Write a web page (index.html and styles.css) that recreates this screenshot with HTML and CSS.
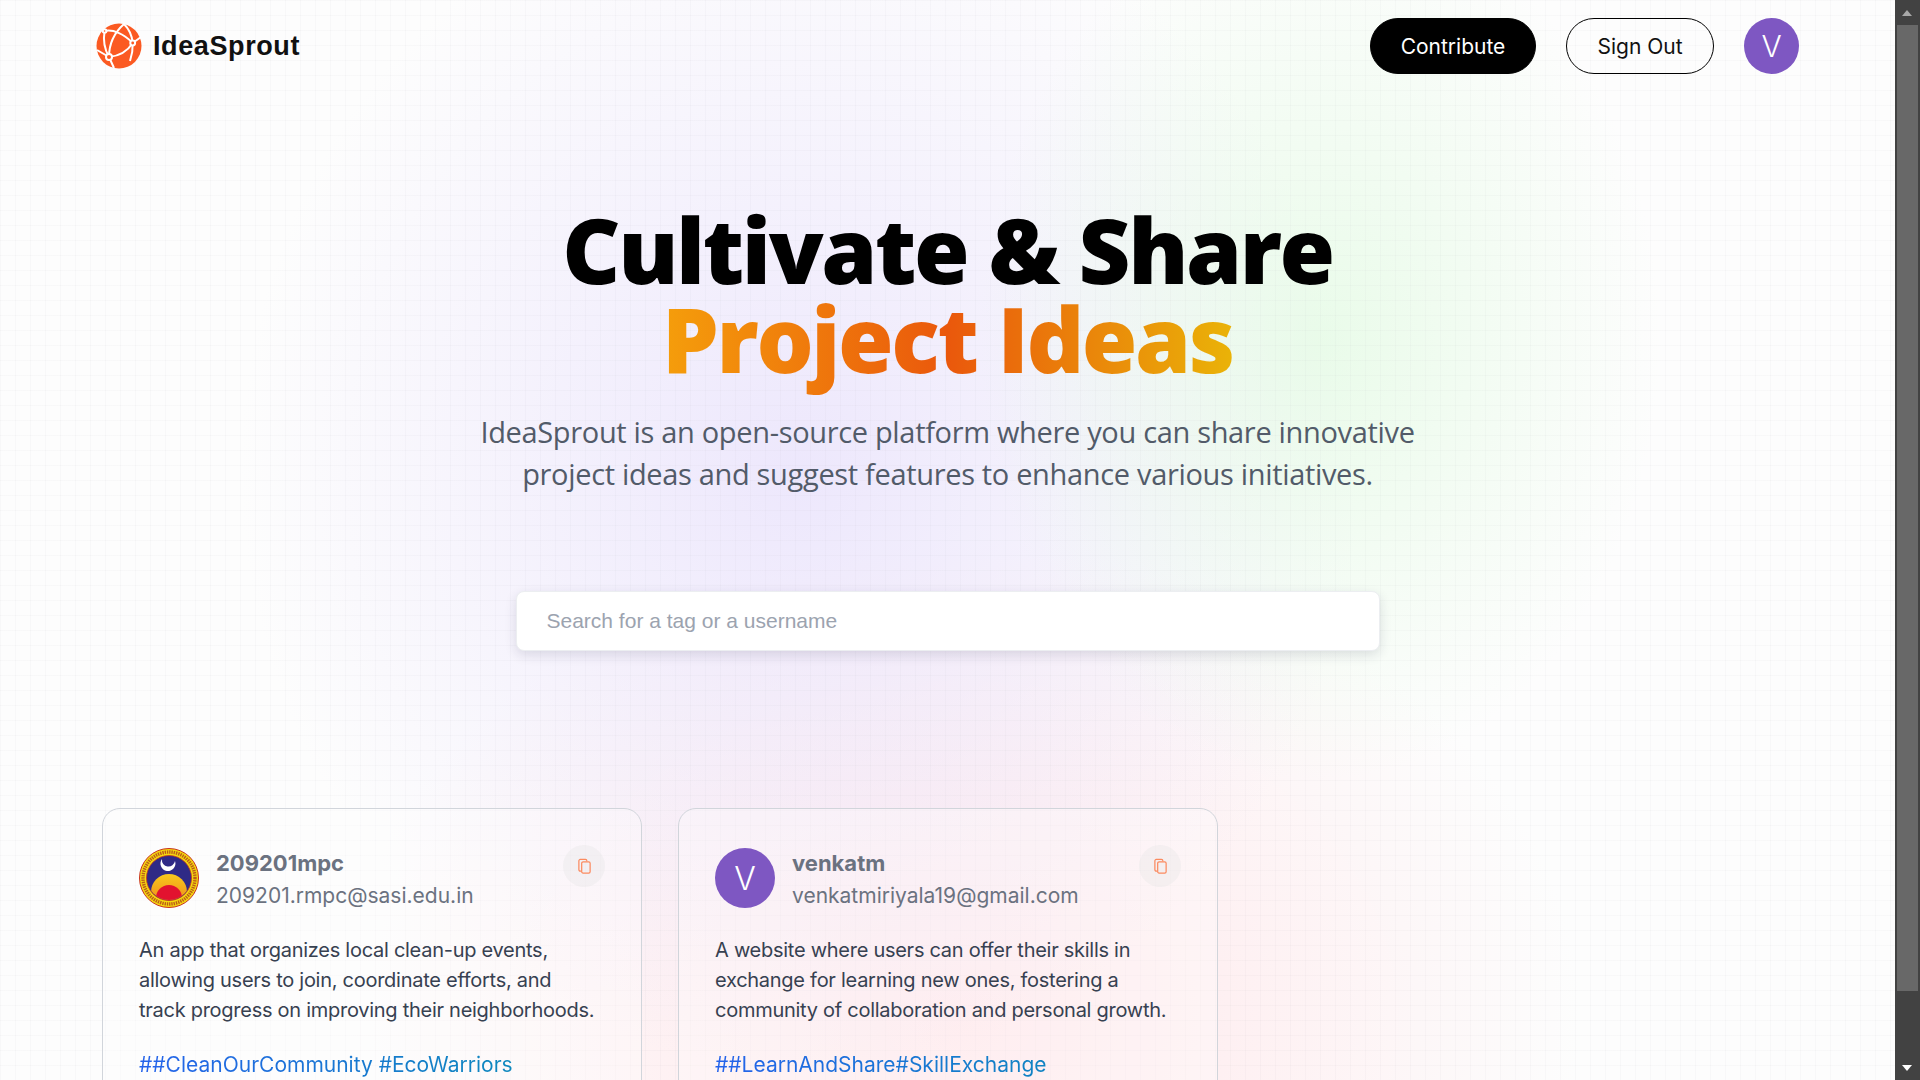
FILE: index.html
```html
<!DOCTYPE html>
<html lang="en">
<head>
  <meta charset="UTF-8">
  <meta name="viewport" content="width=device-width, initial-scale=1.0">
  <title>IdeaSprout</title>
  <link rel="stylesheet" href="styles.css">
</head>
<body>
  <div class="page">
    <div class="bg-grid"></div>

    <nav class="nav">
      <a class="brand" href="#">
        <svg class="brand-logo" viewBox="0 0 46 46" aria-hidden="true">
          <circle cx="23" cy="23" r="22.5" fill="#fb5a22"/>
          <g fill="none" stroke="#fff" stroke-width="2">
            <path d="M8.6 8 C17 6 28 11 36.7 20"/>
            <path d="M28 1 C19 9 13 20 13 34"/>
            <path d="M28 1 C33 6 36 12 36.7 20 C31 29 23 33 13 34"/>
            <path d="M8.6 8 C7 17 9 27 13 34 L18 45"/>
            <path d="M1 27 L13 34"/>
            <path d="M36.7 20 C37 27 36 32 34 38"/>
            <path d="M36.7 20 L45 14"/>
          </g>
          <g fill="#fb5a22" stroke="#fff" stroke-width="2">
            <circle cx="13" cy="34" r="3"/>
            <circle cx="36.7" cy="20" r="2.4"/>
            <circle cx="8.6" cy="8" r="1.8"/>
          </g>
        </svg>
        <span class="brand-name">IdeaSprout</span>
      </a>
      <div class="nav-actions">
        <button class="btn btn-dark">Contribute</button>
        <button class="btn btn-outline">Sign Out</button>
        <div class="avatar avatar-nav">V</div>
      </div>
    </nav>

    <section class="hero">
      <h1 class="hero-title">Cultivate &amp; Share<br><span class="hero-accent">Project Ideas</span></h1>
      <p class="hero-text">IdeaSprout is an open-source platform where you can share innovative<br>project ideas and suggest features to enhance various initiatives.</p>
    </section>

    <div class="search">
      <input class="search-input" type="text" placeholder="Search for a tag or a username">
    </div>

    <section class="cards">
      <article class="card">
        <header class="card-head">
          <svg class="card-photo" viewBox="0 0 60 60" aria-hidden="true">
            <defs>
              <linearGradient id="sunset" x1="0" y1="0" x2="0" y2="1">
                <stop offset="0" stop-color="#f7c91c"/>
                <stop offset="1" stop-color="#ee7a1a"/>
              </linearGradient>
              <clipPath id="inner"><circle cx="30" cy="30" r="22"/></clipPath>
            </defs>
            <circle cx="30" cy="30" r="29.5" fill="#f4d90f" stroke="#c8321d" stroke-width="1"/>
            <circle cx="30" cy="30" r="26" fill="none" stroke="#a8321d" stroke-width="3.4" stroke-dasharray="1.4 0.9" opacity="0.75"/>
            <circle cx="30" cy="30" r="22.5" fill="#2f2a86" stroke="#c8321d" stroke-width="0.8"/>
            <g clip-path="url(#inner)">
              <circle cx="30" cy="44" r="18" fill="url(#sunset)"/>
              <circle cx="30" cy="50" r="13" fill="#e2122f"/>
            </g>
            <path d="M23 11 A7.5 7.5 0 1 0 36 13 A6.5 6.5 0 0 1 23 11 Z" fill="#fff"/>
          </svg>
          <div class="card-user">
            <div class="card-name">209201mpc</div>
            <div class="card-email">209201.rmpc@sasi.edu.in</div>
          </div>
          <button class="copy-btn" aria-label="Copy">
            <svg class="copy-icon" viewBox="0 0 16 16" aria-hidden="true">
              <path d="M4.5 13.5 H3.5 A1.5 1.5 0 0 1 2 12 V2.5 A1.5 1.5 0 0 1 3.5 1 H9 A1.5 1.5 0 0 1 10.5 2.5 V3"/>
              <rect x="5" y="3.5" width="9" height="12" rx="1.5"/>
            </svg>
          </button>
        </header>
        <p class="card-text">An app that organizes local clean-up events, allowing users to join, coordinate efforts, and track progress on improving their neighborhoods.</p>
        <p class="card-tags">##CleanOurCommunity #EcoWarriors</p>
      </article>

      <article class="card">
        <header class="card-head">
          <div class="avatar avatar-card">V</div>
          <div class="card-user">
            <div class="card-name">venkatm</div>
            <div class="card-email">venkatmiriyala19@gmail.com</div>
          </div>
          <button class="copy-btn" aria-label="Copy">
            <svg class="copy-icon" viewBox="0 0 16 16" aria-hidden="true">
              <path d="M4.5 13.5 H3.5 A1.5 1.5 0 0 1 2 12 V2.5 A1.5 1.5 0 0 1 3.5 1 H9 A1.5 1.5 0 0 1 10.5 2.5 V3"/>
              <rect x="5" y="3.5" width="9" height="12" rx="1.5"/>
            </svg>
          </button>
        </header>
        <p class="card-text">A website where users can offer their skills in exchange for learning new ones, fostering a community of collaboration and personal growth.</p>
        <p class="card-tags">##LearnAndShare#SkillExchange</p>
      </article>
    </section>
  </div>

  <div class="scrollbar">
    <div class="scroll-up"></div>
    <div class="scroll-thumb"></div>
    <div class="scroll-down"></div>
  </div>
</body>
</html>
```

FILE: styles.css
```css
* {
  box-sizing: border-box;
}

html, body {
  height: 100%;
}

body {
  margin: 0;
  display: flex;
  overflow: hidden;
  font-family: Inter, "Liberation Sans", sans-serif;
  background: #fff;
}

.page {
  position: relative;
  flex: 1;
  height: 100vh;
  overflow: hidden;
  background:
    radial-gradient(ellipse 340px 440px at 1320px 340px, rgba(220, 250, 220, 0.6), rgba(220, 250, 220, 0)),
    radial-gradient(ellipse 560px 600px at 800px 470px, rgba(230, 222, 252, 0.7), rgba(230, 222, 252, 0)),
    radial-gradient(ellipse 620px 480px at 960px 1020px, rgba(255, 226, 230, 0.85), rgba(255, 226, 230, 0)),
    #fdfdfd;
}

.bg-grid {
  position: absolute;
  inset: 0;
  background-image:
    linear-gradient(to right, rgba(120, 120, 140, 0.035) 1px, transparent 1px),
    linear-gradient(to bottom, rgba(120, 120, 140, 0.035) 1px, transparent 1px);
  background-size: 15px 15px;
}

.nav {
  position: relative;
  display: flex;
  justify-content: space-between;
  align-items: center;
  padding: 18px 96px 0 96px;
}

.brand {
  display: flex;
  align-items: center;
  gap: 11px;
  text-decoration: none;
}

.brand-logo {
  width: 46px;
  height: 46px;
}

.brand-name {
  font-family: "Liberation Sans", Arial, sans-serif;
  font-size: 27px;
  font-weight: 700;
  letter-spacing: 0.6px;
  color: #111;
}

.nav-actions {
  display: flex;
  align-items: center;
  gap: 30px;
}

.btn {
  height: 56px;
  border-radius: 28px;
  font-family: Inter, sans-serif;
  font-size: 21px;
  font-weight: 400;
  cursor: pointer;
}

.btn-dark {
  width: 166px;
  background: #000;
  border: 1px solid #000;
  color: #fff;
}

.btn-outline {
  width: 148px;
  background: transparent;
  border: 1px solid #000;
  color: #111;
}

.avatar {
  display: flex;
  align-items: center;
  justify-content: center;
  flex-shrink: 0;
  border-radius: 50%;
  background: #7e57c2;
  color: #fff;
  font-weight: 300;
}

.avatar-nav {
  width: 55px;
  height: 56px;
  font-size: 30px;
}

.avatar-card {
  width: 60px;
  height: 60px;
  margin-top: 3px;
  font-size: 32px;
}

.hero {
  position: relative;
  margin-top: 131px;
  text-align: center;
}

.hero-title {
  margin: 0;
  font-family: "Open Sans", sans-serif;
  font-size: 90px;
  font-weight: 800;
  line-height: 89px;
  letter-spacing: -2.4px;
  color: #000;
}

.hero-accent {
  background: linear-gradient(90deg, #f59e0b, #ea580c 50%, #eab308);
  -webkit-background-clip: text;
  background-clip: text;
  color: transparent;
}

.hero-text {
  margin: 28px 0 0;
  font-family: "Open Sans", sans-serif;
  font-size: 29px;
  letter-spacing: -0.33px;
  line-height: 42px;
  color: #525b69;
}

.search {
  position: relative;
  display: flex;
  justify-content: center;
  margin-top: 96px;
}

.search-input {
  width: 864px;
  height: 60px;
  padding: 0 30px;
  border: 1px solid #eceef1;
  border-radius: 8px;
  background: #fff;
  box-shadow: 0 4px 12px rgba(30, 30, 60, 0.13);
  font-family: "Liberation Sans", sans-serif;
  font-size: 21px;
  outline: none;
}

.search-input::placeholder {
  color: #9ca3af;
}

.cards {
  position: relative;
  display: grid;
  grid-template-columns: repeat(3, 540px);
  gap: 36px;
  margin-top: 157px;
  padding-left: 102px;
}

.card {
  padding: 36px;
  border: 1px solid #d1d5db;
  border-radius: 18px;
  background: rgba(255, 255, 255, 0.3);
}

.card-head {
  display: flex;
  align-items: flex-start;
  gap: 17px;
}

.card-photo {
  flex-shrink: 0;
  width: 60px;
  height: 60px;
  margin-top: 3px;
}

.card-user {
  flex: 1;
}

.card-name {
  font-size: 22px;
  font-weight: 700;
  line-height: 36px;
  color: #6b7280;
}

.card-email {
  font-size: 21px;
  line-height: 30px;
  color: #6b7280;
}

.copy-btn {
  display: flex;
  align-items: center;
  justify-content: center;
  flex-shrink: 0;
  width: 42px;
  height: 42px;
  padding: 0;
  border: none;
  border-radius: 50%;
  background: rgba(229, 229, 229, 0.35);
  cursor: pointer;
}

.copy-icon {
  width: 15px;
  height: 16px;
  fill: none;
  stroke: #fb8a5f;
  stroke-width: 1.3;
}

.card-text {
  margin: 24px 0 0;
  padding-right: 6px;
  font-size: 20px;
  letter-spacing: -0.27px;
  line-height: 30px;
  color: #374151;
}

.card-tags {
  margin: 25px 0 0;
  font-size: 21px;
  line-height: 30px;
  background: linear-gradient(90deg, #2563eb, #0891b2);
  -webkit-background-clip: text;
  background-clip: text;
  color: transparent;
}

.scrollbar {
  position: relative;
  flex: 0 0 25px;
  height: 100vh;
  background: #424242;
}

.scroll-thumb {
  position: absolute;
  top: 25px;
  left: 2px;
  width: 21px;
  height: 966px;
  background: #686868;
}

.scroll-up, .scroll-down {
  position: absolute;
  left: 7px;
  width: 0;
  height: 0;
  border-left: 5.5px solid transparent;
  border-right: 5.5px solid transparent;
}

.scroll-up {
  top: 10px;
  border-bottom: 6px solid #a8a8a8;
}

.scroll-down {
  bottom: 9px;
  border-top: 6px solid #fff;
}
```
